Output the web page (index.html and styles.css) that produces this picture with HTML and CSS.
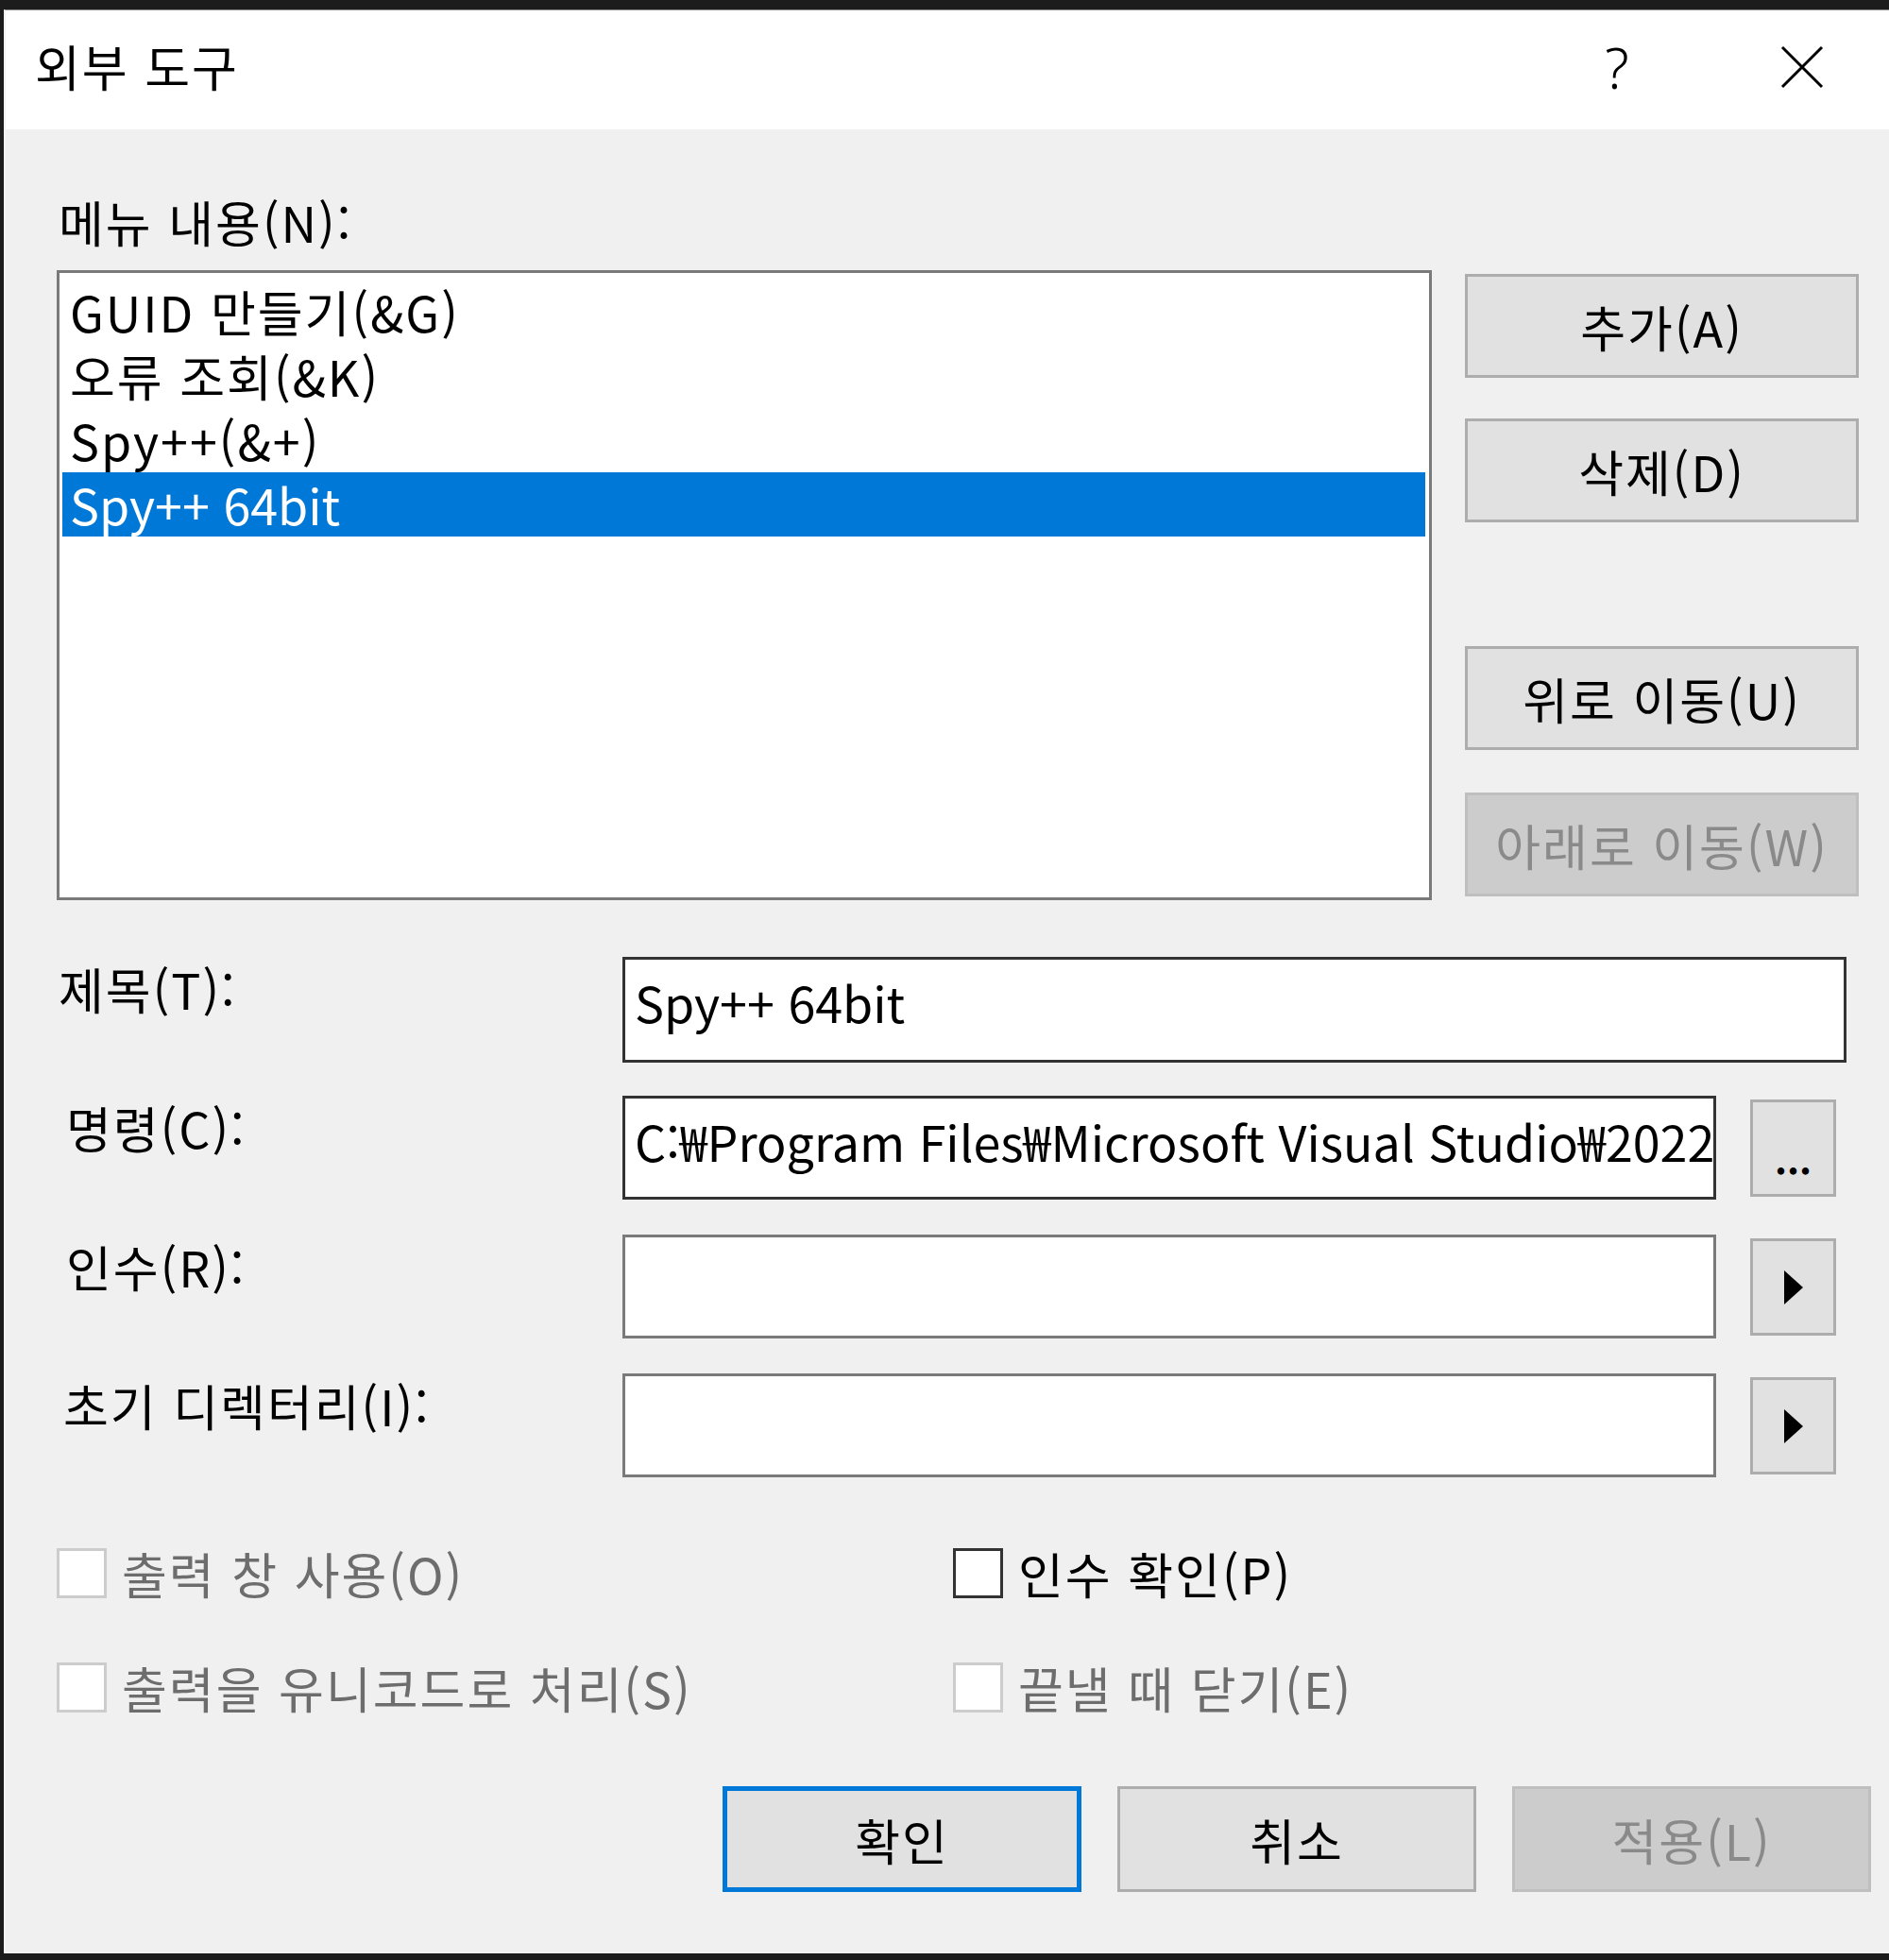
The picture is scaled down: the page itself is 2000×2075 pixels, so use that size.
FILE: index.html
```html
<!DOCTYPE html>
<html lang="ko">
<head>
<meta charset="utf-8">
<title>외부 도구</title>
<link rel="stylesheet" href="styles.css">
</head>
<body>
<div class="window">
  <div class="titlebar">
    <div class="title">외부 도구</div>
    <div class="cap cap-help">?</div>
    <div class="cap cap-close">
      <svg width="46" height="46" viewBox="0 0 46 46"><path d="M2 2 L44 44 M44 2 L2 44" stroke="#000" stroke-width="3" fill="none"/></svg>
    </div>
  </div>
  <div class="main">
    <div class="menu-label">메뉴 내용(N):</div>
    <div class="list-row">
      <div class="listbox">
        <div class="item">GUID 만들기(&amp;G)</div>
        <div class="item">오류 조회(&amp;K)</div>
        <div class="item">Spy++(&amp;+)</div>
        <div class="item selected">Spy++ 64bit</div>
      </div>
      <div class="side-buttons">
        <div class="btn btn-add">추가(A)</div>
        <div class="btn btn-del">삭제(D)</div>
        <div class="btn btn-up">위로 이동(U)</div>
        <div class="btn btn-down disabled">아래로 이동(W)</div>
      </div>
    </div>
    <div class="fields">
      <div class="frow">
        <div class="flabel l-title">제목(T):</div>
        <div class="field field-wide focus">Spy++ 64bit</div>
      </div>
      <div class="frow">
        <div class="flabel l-cmd">명령(C):</div>
        <div class="field focus">C:₩Program Files₩Microsoft Visual Studio₩2022₩</div>
        <div class="btn small-btn"><span class="dots">...</span></div>
      </div>
      <div class="frow">
        <div class="flabel l-arg">인수(R):</div>
        <div class="field"></div>
        <div class="btn small-btn"><svg width="22" height="38" viewBox="0 0 22 38"><polygon points="1,1 21,19 1,37" fill="#000"/></svg></div>
      </div>
      <div class="frow">
        <div class="flabel l-dir">초기 디렉터리(I):</div>
        <div class="field"></div>
        <div class="btn small-btn"><svg width="22" height="38" viewBox="0 0 22 38"><polygon points="1,1 21,19 1,37" fill="#000"/></svg></div>
      </div>
    </div>
    <div class="checks">
      <div class="check disabled"><span class="box"></span><span>출력 창 사용(O)</span></div>
      <div class="check"><span class="box"></span><span>인수 확인(P)</span></div>
      <div class="check disabled"><span class="box"></span><span>출력을 유니코드로 처리(S)</span></div>
      <div class="check disabled"><span class="box"></span><span>끝낼 때 닫기(E)</span></div>
    </div>
    <div class="bottom-buttons">
      <div class="btn bbtn default">확인</div>
      <div class="btn bbtn">취소</div>
      <div class="btn bbtn disabled">적용(L)</div>
    </div>
  </div>
</div>
</body>
</html>
```
FILE: styles.css
```css
* { box-sizing: border-box; }
html, body {
  margin: 0;
  padding: 0;
  width: 2000px;
  height: 2075px;
  overflow: hidden;
  background: #1c1c1c;
}
body {
  font-family: "Noto Sans CJK KR", "Noto Sans", sans-serif;
  font-size: 52px;
  letter-spacing: 2px;
  color: #000;
}
.window {
  margin: 10px 0 0 4px;
  width: 2002px;
  height: 2058px;
  border-top: 1px solid #8a8a8a;
  border-left: 2px solid #f4f4f4;
  border-bottom: 2px solid #f4f4f4;
  display: flex;
  flex-direction: column;
  background: #f0f0f0;
}
.titlebar {
  height: 126px;
  background: #fff;
  display: flex;
  align-items: center;
  flex-shrink: 0;
}
.title {
  flex: 1;
  padding-left: 31px;
  line-height: 68px;
  margin-top: -8px;
}
.cap {
  width: 196px;
  height: 126px;
  display: flex;
  align-items: center;
  justify-content: center;
}
.cap-help {
  font-size: 60px;
  font-weight: 300;
  margin-top: -6px;
  font-family: "Noto Sans", sans-serif;
  letter-spacing: 0;
}
.cap-close svg { margin-top: -6px; }
.main {
  flex: 1;
  padding: 64px 0 0 54px;
}
.menu-label {
  line-height: 68px;
  padding-left: 2px;
}
.list-row {
  display: flex;
  margin-top: 17px;
}
.listbox {
  width: 1456px;
  height: 667px;
  border: 3px solid #7a7a7a;
  background: #fff;
  padding: 7px 4px 0 3px;
}
.item {
  height: 68px;
  line-height: 68px;
  padding-left: 8px;
  white-space: nowrap;
}
.item.selected {
  background: #0078d7;
  color: #fff;
  letter-spacing: 0;
}
.side-buttons {
  margin-left: 35px;
  width: 417px;
  display: flex;
  flex-direction: column;
}
.btn {
  background: #e1e1e1;
  border: 3px solid #adadad;
  display: flex;
  align-items: center;
  justify-content: center;
  white-space: nowrap;
}
.btn.disabled {
  background: #cccccc;
  border-color: #bfbfbf;
  color: #8a8a8a;
}
.side-buttons .btn { height: 110px; }
.btn-add { margin-top: 4px; }
.btn-del { margin-top: 43px; }
.btn-up { margin-top: 131px; }
.btn-down { margin-top: 45px; }
.fields {
  margin-top: 60px;
  display: flex;
  flex-direction: column;
  gap: 35px;
}
.frow {
  display: flex;
  height: 112px;
}
.flabel {
  width: 599px;
  line-height: 68px;
  flex-shrink: 0;
}
.l-title { padding-left: 2px; }
.l-cmd { padding-left: 10px; }
.l-arg { padding-left: 10px; }
.l-dir { padding-left: 7px; }
.field {
  width: 1158px;
  height: 110px;
  background: #fff;
  border: 3px solid #7a7a7a;
  padding: 11px 0 0 10px;
  line-height: 68px;
  letter-spacing: 0;
  white-space: nowrap;
  overflow: hidden;
}
.field.focus { border-color: #333; }
.field-wide {
  width: 1296px;
  height: 112px;
}
.small-btn {
  width: 91px;
  height: 103px;
  margin-left: 36px;
  margin-top: 4px;
}
.dots {
  font-size: 40px;
  line-height: 40px;
  margin-top: 20px;
  font-weight: 700;
  letter-spacing: 0;
}
.checks {
  margin-top: 73px;
  display: grid;
  grid-template-columns: 949px auto;
  row-gap: 68px;
}
.check {
  display: flex;
  align-items: center;
  gap: 16px;
  height: 53px;
  line-height: 68px;
  white-space: nowrap;
}
.box {
  width: 53px;
  height: 53px;
  background: #fff;
  border: 3px solid #333;
  flex-shrink: 0;
}
.check.disabled { color: #6d6d6d; }
.check.disabled .box { border-color: #cccccc; }
.bottom-buttons {
  margin-top: 78px;
  padding-left: 705px;
  display: flex;
  gap: 38px;
}
.bbtn {
  width: 380px;
  height: 112px;
}
.bbtn.default {
  border: 5px solid #0078d7;
}
```
